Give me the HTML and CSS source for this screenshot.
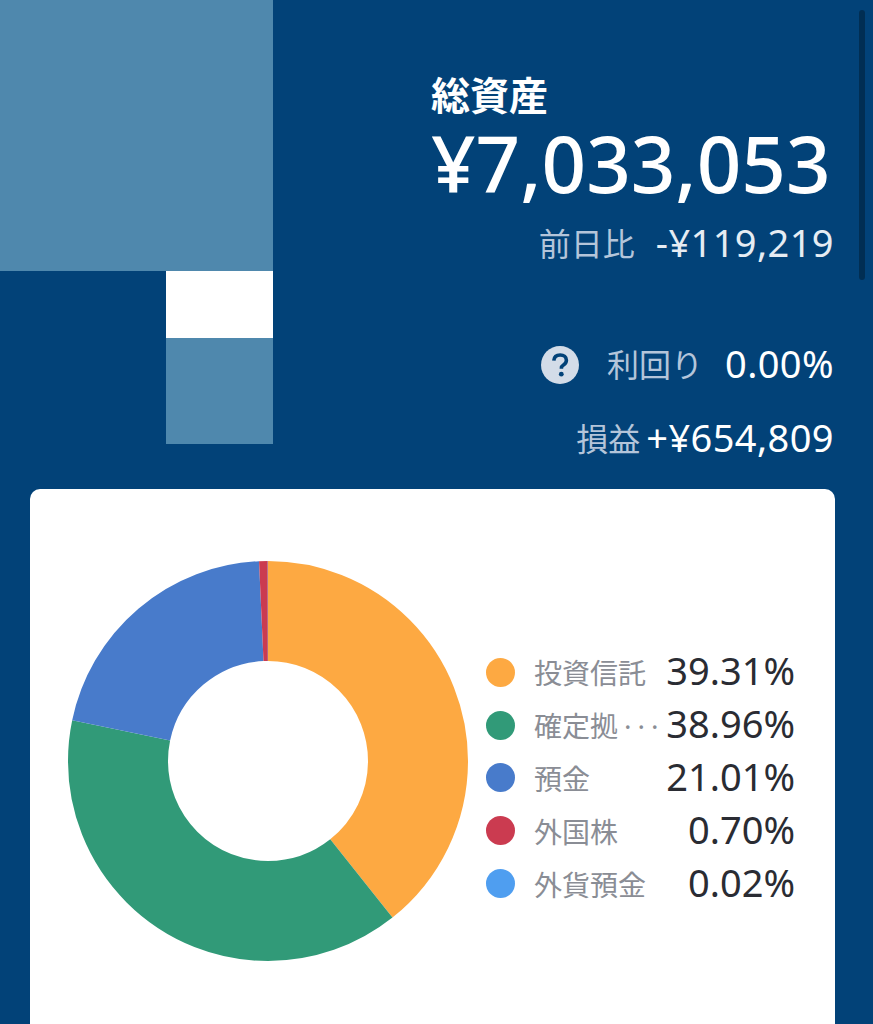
FILE: index.html
```html
<!DOCTYPE html>
<html lang="ja">
<head>
<meta charset="utf-8">
<title>総資産</title>
<link rel="stylesheet" href="styles.css">
</head>
<body>
<div class="page">
  <header class="header">
    <div class="treemap">
      <div class="tile tile-big"></div>
      <div class="tile tile-white"></div>
      <div class="tile tile-small"></div>
    </div>
    <div class="summary">
      <div class="total">
        <div class="total-label">総資産</div>
        <div class="total-value">¥7,033,053</div>
      </div>
      <div class="line line-day"><span class="key">前日比</span><span class="val">-¥119,219</span></div>
      <div class="line line-yield">
        <svg class="help" viewBox="0 0 38 38" aria-hidden="true">
          <circle cx="19" cy="19" r="19" fill="#d3dce8"/>
          <path d="M12.8 14.6c.3-3.6 2.8-5.6 6.4-5.6 3.7 0 6.2 2.1 6.2 5.2 0 2.3-1.2 3.6-3 4.8-1.6 1-2 1.7-2 3.2v.6" fill="none" stroke="#024278" stroke-width="3.6"/>
          <circle cx="20.3" cy="28.2" r="2.4" fill="#024278"/>
        </svg>
        <span class="key key-yield">利回り</span><span class="val">0.00%</span>
      </div>
      <div class="line line-pl"><span class="key">損益</span><span class="val val-pl">+¥654,809</span></div>
    </div>
  </header>
  <main class="card">
    <svg class="donut" viewBox="0 0 400 400" aria-hidden="true">
      <g fill="none" stroke-width="100" transform="rotate(-90 200 200)">
        <circle cx="200" cy="200" r="150" pathLength="100" stroke="#fda942" stroke-dasharray="39.31 60.69" stroke-dashoffset="0"/>
        <circle cx="200" cy="200" r="150" pathLength="100" stroke="#319a78" stroke-dasharray="38.96 61.04" stroke-dashoffset="-39.31"/>
        <circle cx="200" cy="200" r="150" pathLength="100" stroke="#487bcb" stroke-dasharray="21.01 78.99" stroke-dashoffset="-78.27"/>
        <circle cx="200" cy="200" r="150" pathLength="100" stroke="#cb3b50" stroke-dasharray="0.70 99.30" stroke-dashoffset="-99.28"/>
        <circle cx="200" cy="200" r="150" pathLength="100" stroke="#4f9ef0" stroke-dasharray="0.02 99.98" stroke-dashoffset="-99.98"/>
      </g>
    </svg>
    <ul class="legend">
      <li class="row"><span class="dot dot-orange"></span><span class="name">投資信託</span><span class="pct">39.31%</span></li>
      <li class="row"><span class="dot dot-green"></span><span class="name">確定拠<span class="more">···</span></span><span class="pct">38.96%</span></li>
      <li class="row"><span class="dot dot-blue"></span><span class="name">預金</span><span class="pct">21.01%</span></li>
      <li class="row"><span class="dot dot-red"></span><span class="name">外国株</span><span class="pct">0.70%</span></li>
      <li class="row"><span class="dot dot-sky"></span><span class="name">外貨預金</span><span class="pct">0.02%</span></li>
    </ul>
  </main>
  <div class="scrollbar"></div>
</div>
</body>
</html>
```
FILE: styles.css
```css
* { box-sizing: border-box; }
html, body { margin: 0; padding: 0; height: 100%; }
body {
  background: #024278;
  font-family: "Noto Sans", "Noto Sans CJK JP", sans-serif;
  overflow: hidden;
}
.page { position: relative; height: 1024px; overflow: hidden; }
.header { display: flex; height: 489px; }
.treemap {
  width: 273px;
  height: 444px;
  display: grid;
  grid-template-columns: 166px 107px;
  grid-template-rows: 271px 67px 106px;
  flex: none;
}
.tile-big { grid-column: 1 / 3; background: #4f88ad; }
.tile-white { grid-column: 2; grid-row: 2; background: #fff; }
.tile-small { grid-column: 2; grid-row: 3; background: #4f88ad; }
.summary {
  flex: 1;
  display: flex;
  flex-direction: column;
  align-items: flex-end;
  padding: 72px 39px 0 0;
}
.total { width: 403px; color: #fff; }
.total-label { font-size: 39px; line-height: 46px; font-weight: 700; }
.total-value { margin-top: -1px; font-size: 78px; line-height: 92px; font-weight: 500; white-space: nowrap; }
.line { display: flex; align-items: center; color: #fff; font-size: 38px; line-height: 48px; letter-spacing: 0.4px; }
.key { color: #b4c5da; font-size: 32px; letter-spacing: 0; }
.val { color: #fff; margin-top: -2px; margin-bottom: 2px; }
.line-day { margin-top: 11px; }
.line-day .val { margin-left: 21px; color: #e6ecf3; }
.line-yield { margin-top: 73px; }
.help { width: 38px; height: 38px; margin-right: 28px; }
.key-yield { margin-right: 22px; }
.line-pl { margin-top: 26px; }
.val-pl { margin-left: 6px; }
.card {
  margin: 0 38px 0 30px;
  height: 600px;
  background: #fff;
  border-radius: 10px;
  display: flex;
  align-items: flex-start;
  padding: 72px 0 0 38px;
}
.donut { width: 400px; height: 400px; flex: none; }
.legend { list-style: none; margin: 85px 0 0 18px; padding: 0; width: 309px; }
.row { display: flex; align-items: center; height: 52.8px; }
.dot { width: 29px; height: 29px; border-radius: 50%; flex: none; }
.dot-orange { background: #fda942; }
.dot-green { background: #319a78; }
.dot-blue { background: #487bcb; }
.dot-red { background: #cb3b50; }
.dot-sky { background: #4f9ef0; }
.name { margin-left: 19px; font-size: 28px; color: #8a8d95; white-space: nowrap; }
.more { margin-left: 6px; letter-spacing: 6px; }
.pct { margin-left: auto; font-size: 38px; line-height: 48px; margin-top: -4px; color: #2a2c33; }
.scrollbar {
  position: absolute;
  top: 10px;
  left: 859px;
  width: 6px;
  height: 270px;
  border-radius: 3px;
  background: rgba(0, 0, 0, 0.3);
}
```
